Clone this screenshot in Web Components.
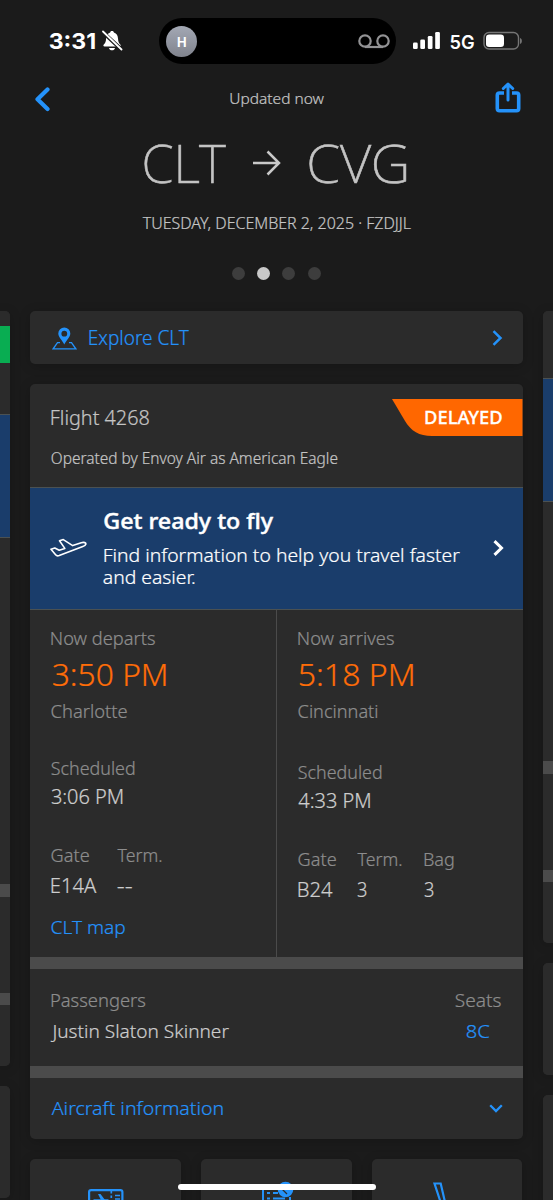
<!DOCTYPE html>
<html lang="en">
<head>
<meta charset="utf-8">
<title>Flight 4268</title>
<style>
html,body{margin:0;height:1200px;overflow:hidden;background:#1b1b1b}
body{font-family:"Noto Sans","Open Sans",sans-serif;font-weight:300;color:#c4c4c4;-webkit-text-stroke:.22px}
</style>
</head>
<body>
<trip-screen></trip-screen>
<script>
const define = (name, html) => customElements.define(name, class extends HTMLElement {
  constructor() {
    super();
    const t = document.createElement('template');
    t.innerHTML = html;
    this.attachShadow({ mode: 'open' }).append(t.content.cloneNode(true));
  }
});

// Text whose inked width is fixed: w = width, s = font size, h = line height, "|" = line break.
const pen = document.createElement('canvas').getContext('2d');
customElements.define('fit-text', class extends HTMLElement {
  connectedCallback() {
    const a = (n, d) => this.getAttribute(n) || d;
    const w = +a('w'), s = +a('s', 18), h = +a('h', 20);
    const lines = a('text').split('|');
    if (!this.shadowRoot) this.attachShadow({ mode: 'open' });
    this.shadowRoot.innerHTML = `<style>
      :host{display:block;flex:none;width:${w}px;height:${h * lines.length}px;line-height:${h}px;font-size:${s}px;white-space:pre}
      span{display:inline-block;vertical-align:top;transform-origin:0 50%}</style><span></span>`;
    const span = this.shadowRoot.querySelector('span');
    span.textContent = lines.join('\n');
    const c = getComputedStyle(this);
    pen.font = `${c.fontWeight} ${s * 10}px ${c.fontFamily}`;
    const m = pen.measureText(lines[0]);
    const left = m.actualBoundingBoxLeft / 10, right = m.actualBoundingBoxRight / 10;
    const k = (w - 1) / (left + right);
    span.style.transform = `translateX(${left * k + .7}px) scaleX(${k})`;
  }
});

define('status-bar', `<style>
:host{display:flex;height:82px;box-sizing:border-box;padding:18px 0 0 50px;align-items:flex-start;font-family:Inter,sans-serif;font-weight:700;color:#fff;-webkit-text-stroke:0}
svg{display:block;flex:none}
.time{margin:11px 1px 0 -1px}.bell{margin:12px 0 0 6px}
.island{margin-left:36px;width:237px;height:46px;border-radius:23px;background:#000;box-sizing:border-box;padding:0 6px 0 7px;display:flex;align-items:center;justify-content:space-between}
.face{width:31px;height:31px;border-radius:50%;background:linear-gradient(#a3a8b4,#80838d);display:grid;place-items:center}
.face fit-text{margin-top:1px}
.sig{margin:14px 0 0 17px}.net{margin:12.500px 0 0 10px;font-weight:600}.bat{margin:13px 0 0 9px}
</style>
<fit-text class="time" w="46" s="22" h="24" text="3:31"></fit-text>
<svg class="bell" width="21" height="22" viewBox="0 0 21 22"><path d="M10 1c1.3 0 1.8.7 1.9 1.5 2.900.9 3.900 3.100 4.100 6 .2 3.500.9 4.500 2.300 6 .8.9.5 1.900-.7 1.900H2.500c-1.200 0-1.500-1-.7-1.900 1.400-1.500 2.100-2.500 2.300-6 .2-2.900 1.200-5.100 4.100-6C8.200 1.700 8.700 1 10 1zM7 18h6c-.3 1.500-1.500 2.300-3 2.300S7.300 19.500 7 18z" fill="#fff"/><path d="M.5 2l19 17.500" stroke="#1b1b1b" stroke-width="3.800"/><path d="M1 1.500l18.500 18" stroke="#fff" stroke-width="1.800" stroke-linecap="round"/></svg>
<div class="island"><div class="face"><fit-text w="9" s="13" h="16" text="H"></fit-text></div>
<svg width="32" height="15" viewBox="0 0 32 15" fill="none" stroke="#929294" stroke-width="2.200"><circle cx="7" cy="7" r="5.700"/><circle cx="25" cy="7" r="5.700"/><path d="M7 13h18"/></svg></div>
<svg class="sig" width="27" height="17" viewBox="0 0 27 17" fill="#fff"><rect y="10.500" width="4.700" height="6.500" rx="1.300"/><rect x="7.300" y="7.500" width="4.700" height="9.500" rx="1.300"/><rect x="14.800" y="4" width="4.700" height="13" rx="1.300"/><rect x="22.200" width="4.700" height="17" rx="1.300"/></svg>
<fit-text class="net" w="24" s="18.500" h="22" text="5G"></fit-text>
<svg class="bat" width="40" height="20" viewBox="0 0 40 20"><rect x="1" y="1.500" width="34.500" height="16.500" rx="5" fill="none" stroke="#757575" stroke-width="1.400"/><path d="M37 7c2.500.5 2.500 5.500 0 6z" fill="#757575"/><rect x="3" y="3.500" width="18" height="12.500" rx="3.200" fill="#fff"/></svg>`);

define('nav-bar', `<style>
:host{display:flex;justify-content:space-between;align-items:flex-start;height:54px;padding:0 32px 0 34px}
svg{display:block}.back{margin-top:5px}.share{margin-top:-.5px}fit-text{margin-top:6px;margin-left:7px}
</style>
<svg class="back" width="17" height="25" viewBox="0 0 17 25" fill="none" stroke="#2492fa" stroke-width="4.200" stroke-linecap="round" stroke-linejoin="round"><path d="M13.500 2.400L3.500 12.300l10 9.700"/></svg>
<fit-text w="94" s="15" text="Updated now"></fit-text>
<svg class="share" width="26" height="31" viewBox="0 0 26 31" fill="none" stroke="#2492fa" stroke-width="3.600" stroke-linejoin="round" stroke-linecap="round"><path d="M9 11H4.500Q2.300 11 2.300 13v13.500q0 2.200 2.200 2.200h17q2.200 0 2.200-2.200V13q0-2-2.200-2H17" stroke-linecap="butt"/><path d="M13 18V3M8.300 6.500L13 2l4.700 4.500" stroke-width="3"/></svg>`);

define('trip-title', `<style>
:host{display:flex;flex-direction:column;align-items:center;height:175px}
.route{display:flex;align-items:center;height:56px;margin:-1.500px 1.500px 0 0;font-weight:200;-webkit-text-stroke:.6px}
svg{display:block;margin:0 28px 0 27px}
.date{margin:22.500px 1px 0 0}
.dots{display:flex;gap:12.200px;margin:34px .5px 0 0}
i{width:13px;height:13px;border-radius:50%;background:#3d3d3d}.on{background:#c9c9c9}
</style>
<div class="route"><fit-text w="82" s="53.500" h="56" text="CLT"></fit-text>
<svg width="28" height="26" viewBox="0 0 28 26" fill="none" stroke="#c9c9c9" stroke-width="2.500"><path d="M0 13h26M14.500 1.500L26 13 14.500 24.500"/></svg>
<fit-text w="98" s="53.500" h="56" text="CVG"></fit-text></div>
<fit-text class="date" w="269" s="16" text="TUESDAY, DECEMBER 2, 2025 · FZDJJL"></fit-text>
<div class="dots"><i></i><i class="on"></i><i></i><i></i></div>`);

define('ui-card', `<style>:host{display:block;background:#2b2b2b;border-radius:5px;overflow:hidden;box-shadow:0 2px 12px #0003}</style><slot></slot>`);

define('explore-link', `<style>
:host{display:flex;height:53px;align-items:flex-start;box-sizing:border-box;padding:0 20px 0 22px;color:#2492fa}
svg{display:block}.pin{margin:15.500px 0 0}fit-text{margin:17px auto 0 12px}.go{margin-top:18.500px}
</style>
<svg class="pin" width="25" height="24" viewBox="0 0 25 24" fill="none" stroke="#2492fa" stroke-width="1.300"><path d="M8 15.700H5.500L1.200 21.800h22.600l-4.300-6.100H17"/><path d="M12.300.5a6 6 0 0 0-6 6.100c0 3.300 3.500 6.400 6 10.800 2.500-4.400 6-7.500 6-10.800a6 6 0 0 0-6-6.100zm0 3.300a2.900 2.900 0 1 1 0 5.800 2.900 2.900 0 0 1 0-5.800z" fill="#2492fa" stroke="none"/></svg>
<fit-text w="100" s="19.500" text="Explore CLT"></fit-text>
<svg class="go" width="11" height="16" viewBox="0 0 11 16" fill="none" stroke="#2492fa" stroke-width="2.500"><path d="M1.500 1.200L8.500 8l-7 6.800"/></svg>`);

define('flight-head', `<style>
:host{display:block;height:103px}
.row{display:flex;justify-content:space-between;height:52px;padding-top:15px}
.row>fit-text{margin:8.500px 0 0 21.300px}
.badge{position:relative;width:130.500px;height:37px;color:#fff;font-weight:500;-webkit-text-stroke:.3px;display:grid;grid-template-areas:"a"}
.badge>*{grid-area:a}.badge fit-text{margin:8px 0 0 33.300px}
.op{margin:-2.700px 0 0 20.800px}
</style>
<div class="row"><fit-text w="98" s="19.500" text="Flight 4268"></fit-text>
<div class="badge"><svg width="130.500" height="37" viewBox="0 0 130.500 37"><path d="M0 0h130.500v37H40C27 37 19 32 13 22z" fill="#ff6700"/></svg><fit-text w="77" s="18.300" text="DELAYED"></fit-text></div></div>
<fit-text class="op" w="286.500" s="15.800" text="Operated by Envoy Air as American Eagle"></fit-text>`);

define('ready-banner', `<style>
:host{display:flex;height:122.500px;box-sizing:border-box;background:#1a3d6b;border-top:1px solid #4b5152;border-bottom:1px solid #4b5152;color:#fff;padding:0 19px 0 20px;align-items:flex-start}
svg{display:block}.plane{margin-top:50px}.copy{margin:19.500px auto 0 16.500px}.go{margin-top:52px}
.t{font-weight:500;-webkit-text-stroke:.45px;margin-bottom:12px}
</style>
<svg class="plane" width="37" height="20" viewBox="0 0 37 20" fill="none" stroke="#fff" stroke-width="1.600" stroke-linejoin="round"><path d="M1 11.200L4.800 10l4.400 2.200 5.600-1.800-5.300-7.600 3.800-1.200 9.400 6 8.600-2.900c2.800-.8 4.900.1 4.500 1.500-.3 1.100-1.500 1.700-3 2.200L9.200 17.600c-1.500.5-2.700.3-3.600-.8z"/></svg>
<div class="copy"><fit-text class="t" w="169.500" s="22" h="24" text="Get ready to fly"></fit-text>
<fit-text class="c" w="356" s="19" h="22.600" text="Find information to help you travel faster|and easier."></fit-text></div>
<svg class="go" width="11" height="16" viewBox="0 0 11 16" fill="none" stroke="#fff" stroke-width="3"><path d="M1.500 1.200L8.500 8l-7 6.800"/></svg>`);

define('leg-times', `<style>
:host{display:grid;grid-template-columns:246px 1fr;height:347.500px;color:#8d8d8d}
section{padding:18.500px 0 0 20.700px}
section+section{border-left:1.500px solid #4b4b4b;padding-left:20.500px}
.big{color:#ff6d08;margin:8.500px 0 10.500px 1px}
.sch{margin-top:36.700px}.late .sch{margin-top:40.700px}
.v{color:#cdcdcd}.sch+.v{margin:9.200px 0 38px .2px}
.g{display:grid;gap:11.200px 0;grid-template-columns:66px 1fr}.late .g{grid-template-columns:59.500px 66.500px 1fr}
.map{color:#2492fa;margin-top:20.500px}
</style>
<section><fit-text w="104" s="18" text="Now departs"></fit-text><fit-text class="big" w="114" s="31.500" h="34" text="3:50 PM"></fit-text><fit-text w="76" s="18" text="Charlotte"></fit-text>
<fit-text class="sch" w="83.500" s="18" text="Scheduled"></fit-text><fit-text class="v" w="71.500" s="19.500" text="3:06 PM"></fit-text>
<div class="g"><fit-text w="38" s="18" text="Gate"></fit-text><fit-text w="44.500" s="18" text="Term."></fit-text><fit-text class="v" w="45.500" s="19.500" text="E14A"></fit-text><fit-text class="v" w="15" s="19.500" text="--"></fit-text></div>
<fit-text class="map" w="74" s="19" text="CLT map"></fit-text></section>
<section class="late"><fit-text w="96" s="18" text="Now arrives"></fit-text><fit-text class="big" w="114" s="31.500" h="34" text="5:18 PM"></fit-text><fit-text w="79.500" s="18" text="Cincinnati"></fit-text>
<fit-text class="sch" w="83.500" s="18" text="Scheduled"></fit-text><fit-text class="v" w="72" s="19.500" text="4:33 PM"></fit-text>
<div class="g"><fit-text w="38" s="18" text="Gate"></fit-text><fit-text w="44.500" s="18" text="Term."></fit-text><fit-text w="29.500" s="18" text="Bag"></fit-text><fit-text class="v" w="34.500" s="19.500" text="B24"></fit-text><fit-text class="v" w="9.500" s="19.500" text="3"></fit-text><fit-text class="v" w="9.500" s="19.500" text="3"></fit-text></div></section>`);

define('passenger-row', `<style>
:host{display:flex;justify-content:space-between;box-sizing:border-box;height:121px;border:solid #4b4b4b;border-width:12.500px 0;padding:20.700px 22px 0 21px;color:#8d8d8d}
.v{margin:11.500px 0 0 -1.500px;color:#cdcdcd}.seat{color:#2492fa;margin-left:11px}
</style>
<div><fit-text w="94.500" s="18.500" text="Passengers"></fit-text><fit-text class="v" w="179" s="19" text="Justin Slaton Skinner"></fit-text></div>
<div><fit-text w="46" s="18.500" text="Seats"></fit-text><fit-text class="v seat" w="23.500" s="19" text="8C"></fit-text></div>`);

define('aircraft-row', `<style>
:host{display:flex;justify-content:space-between;height:61px;box-sizing:border-box;padding:20.300px 20px 0 20.500px;color:#2492fa}svg{display:block;margin-top:5.700px}
</style><fit-text w="172" s="19" text="Aircraft information"></fit-text>
<svg width="14" height="10" viewBox="0 0 14 10" fill="none" stroke="#2492fa" stroke-width="2.300"><path d="M1.200 1.200L7 7l5.800-5.800"/></svg>`);

define('action-tiles', `<style>
:host{display:grid;grid-template-columns:repeat(3,1fr);gap:20px}
ui-card{height:70px}svg{display:block}
</style>
<ui-card><svg width="151" height="60" viewBox="0 0 151 60" fill="none" stroke="#2492fa" stroke-width="2.200"><rect x="59.100" y="31.100" width="33.300" height="24" rx="2"/><path d="M81.300 32v2.500m0 2v2.500m0 2v3M85 36.500h5M85 40h5M63.500 41h15" stroke-width="1.700"/><path d="M68 35h2.500l4.500 6h-4z" fill="#2492fa" stroke="none"/></svg></ui-card>
<ui-card><svg width="151" height="60" viewBox="0 0 151 60" fill="none" stroke="#2492fa" stroke-width="2"><path d="M62 58V30h12M89 38v20M66 34h3m3 0h5M66 39.500h3m3 0h12"/><circle cx="84.500" cy="30.500" r="7.800" fill="#2492fa" stroke="none"/><path d="M81 30l5 5" stroke="#2b2b2b" stroke-width="1.300"/></svg></ui-card>
<ui-card><svg width="151" height="60" viewBox="0 0 151 60" fill="none" stroke="#2492fa" stroke-width="2.200"><path d="M71.500 52L62.500 24.500h6.200l6.500 28"/></svg></ui-card>`);

// Slices of the neighbouring trips: bands = list of "height colour" stripes.
customElements.define('peek-card', class extends HTMLElement {
  connectedCallback() {
    const side = this.getAttribute('side');
    const bands = this.getAttribute('bands').split(',').map(b => {
      const [h, c] = b.trim().split(' ');
      return `<i style="height:${h}px;background:${c}"></i>`;
    }).join('');
    this.attachShadow({ mode: 'open' }).innerHTML = `<style>:host{display:block;background:#2b2b2b;overflow:hidden;border-radius:${side === 'left' ? '0 5px 5px 0' : '5px 0 0 5px'};box-shadow:0 2px 12px #0003}i{display:block}</style>${bands}`;
  }
});

define('trip-screen', `<style>
:host{display:block;position:relative;height:1200px;overflow:hidden;background:#1b1b1b}
.pages{display:grid;grid-template-columns:10px 492.500px 10.500px;column-gap:20px;align-items:start}
.col{display:grid;gap:20px}
.home{position:absolute;left:178px;top:1183.500px;width:197.500px;height:6.500px;border-radius:4px;background:#fff}
</style>
<status-bar></status-bar><nav-bar></nav-bar><trip-title></trip-title>
<div class="pages">
<div class="col side"><peek-card side="left" bands="15 #2b2b2b,36.500 #09ad52,51.500 #2b2b2b,1 #4b5152,121.500 #1a3d6b,1 #4b5152,346.500 #2b2b2b,12.500 #4b4b4b,96 #2b2b2b,12.500 #4b4b4b,61 #2b2b2b"></peek-card><peek-card side="left" bands="112 #2b2b2b"></peek-card></div>
<div class="col"><ui-card><explore-link></explore-link></ui-card>
<ui-card><flight-head></flight-head><ready-banner></ready-banner><leg-times></leg-times><passenger-row></passenger-row><aircraft-row></aircraft-row></ui-card>
<action-tiles></action-tiles></div>
<div class="col side"><peek-card side="right" bands="67 #2b2b2b,1 #4b5152,121.500 #1a3d6b,1 #4b5152,259.500 #2b2b2b,12.500 #4b4b4b,96 #2b2b2b,12.500 #4b4b4b,61 #2b2b2b"></peek-card><peek-card side="right" bands="112 #2b2b2b"></peek-card><peek-card side="right" bands="112 #2b2b2b"></peek-card></div>
</div>
<div class="home"></div>`);
</script>
</body>
</html>
